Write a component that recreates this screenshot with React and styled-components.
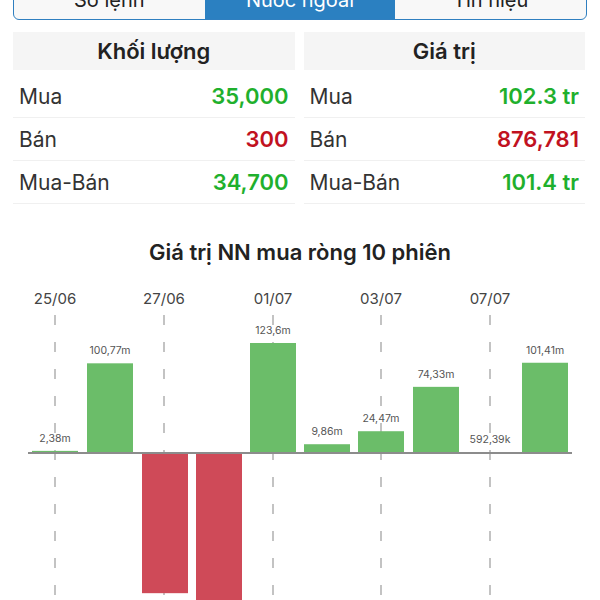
import React from "react";
import styled, { createGlobalStyle } from "styled-components";

const Global = createGlobalStyle`
  html, body { margin: 0; padding: 0; background: #ffffff; }
  body { font-family: Inter, "Noto Sans", "Liberation Sans", sans-serif; overflow: hidden; width: 600px; height: 600px; }
`;

const Page = styled.div`
  width: 600px;
  height: 600px;
  overflow: hidden;
  display: flex;
  flex-direction: column;
`;

const Segment = styled.div`
  margin: -20px 13px 0;
  height: 40px;
  display: flex;
  border: 1px solid #2f7fc0;
  border-radius: 6px;
  overflow: hidden;
  box-sizing: border-box;
  background: #f8f8f8;
`;

const SegItem = styled.div`
  flex: 1;
  display: flex;
  align-items: center;
  justify-content: center;
  font-size: 20px;
  color: ${(p) => (p.$active ? "#ffffff" : "#222222")};
  background: ${(p) => (p.$active ? "#2b80c1" : "transparent")};
`;

const Tables = styled.div`
  margin: 12px 15px 0 13px;
  display: grid;
  grid-template-columns: 1fr 1fr;
  gap: 9px;
`;

const Panel = styled.div`
  display: flex;
  flex-direction: column;
`;

const Header = styled.div`
  height: 38px;
  background: #f5f5f5;
  display: flex;
  align-items: center;
  justify-content: center;
  font-size: 22px;
  font-weight: 600;
  color: #222222;
  margin-bottom: 5px;
`;

const Row = styled.div`
  height: 43px;
  box-sizing: border-box;
  border-bottom: 1px solid #f0f0f0;
  display: flex;
  align-items: center;
  justify-content: space-between;
  padding: 0 6px;
  font-size: 21px;
`;

const Label = styled.span`
  color: #333333;
`;

const Value = styled.span`
  font-size: 22px;
  font-weight: 600;
  color: ${(p) => (p.$tone === "down" ? "#c1121f" : "#1fb02d")};
`;

const Title = styled.div`
  margin-top: 34px;
  height: 28px;
  line-height: 28px;
  text-align: center;
  font-size: 22px;
  font-weight: 600;
  color: #222222;
`;

const ChartSvg = styled.svg`
  display: block;
  margin-top: 14px;
  flex-shrink: 0;
`;

const tables = [
  {
    title: "Khối lượng",
    rows: [
      ["Mua", "35,000", "up"],
      ["Bán", "300", "down"],
      ["Mua-Bán", "34,700", "up"],
    ],
  },
  {
    title: "Giá trị",
    rows: [
      ["Mua", "102.3 tr", "up"],
      ["Bán", "876,781", "down"],
      ["Mua-Bán", "101.4 tr", "up"],
    ],
  },
];

const bars = [
  { x: 32, v: 2.38, label: "2,38m" },
  { x: 87, v: 100.77, label: "100,77m" },
  { x: 142, v: -157.5, label: "" },
  { x: 196, v: -175, label: "" },
  { x: 250, v: 123.6, label: "123,6m" },
  { x: 304, v: 9.86, label: "9,86m" },
  { x: 358, v: 24.47, label: "24,47m" },
  { x: 413, v: 74.33, label: "74,33m" },
  { x: 467, v: 0.59, label: "592,39k" },
  { x: 522, v: 101.41, label: "101,41m" },
];

const dates = [
  { x: 55, t: "25/06" },
  { x: 164, t: "27/06" },
  { x: 273, t: "01/07" },
  { x: 381, t: "03/07" },
  { x: 490, t: "07/07" },
];

const BASE = 453;
const K = 0.89;
const W = 46;

function Chart() {
  return (
    <ChartSvg width="600" height="320" viewBox="0 280 600 320">
      {dates.map((d) => (
        <g key={d.t}>
          <text x={d.x} y={300} textAnchor="middle" dominantBaseline="middle" fontSize="15" fill="#444" fontFamily="Inter, sans-serif">
            {d.t}
          </text>
          <line x1={d.x} x2={d.x} y1={315} y2={600} stroke="#b0b0b0" strokeWidth="1.5" strokeDasharray="10 17" />
        </g>
      ))}
      {bars.map((b, i) => {
        const h = Math.max(Math.abs(b.v) * K, 1);
        const pos = b.v >= 0;
        const y = pos ? BASE - h : BASE;
        return (
          <g key={i}>
            {b.label && pos && (
              <text x={b.x + W / 2} y={y - 12} textAnchor="middle" dominantBaseline="middle" fontSize="10.5" fill="#555" fontFamily="Inter, sans-serif">
                {b.label}
              </text>
            )}
            <rect x={b.x} y={y} width={W} height={h} fill={pos ? "#6bbd69" : "#cf4a58"} />
          </g>
        );
      })}
      <line x1={28} x2={572} y1={BASE} y2={BASE} stroke="#8c8c8c" strokeWidth="2" />
    </ChartSvg>
  );
}

export default function App() {
  return (
    <>
      <Global />
      <Page>
        <Segment>
          <SegItem>Số lệnh</SegItem>
          <SegItem $active>Nước ngoài</SegItem>
          <SegItem>Tín hiệu</SegItem>
        </Segment>
        <Tables>
          {tables.map((t) => (
            <Panel key={t.title}>
              <Header>{t.title}</Header>
              {t.rows.map(([l, v, tone]) => (
                <Row key={l}>
                  <Label>{l}</Label>
                  <Value $tone={tone}>{v}</Value>
                </Row>
              ))}
            </Panel>
          ))}
        </Tables>
        <Title>Giá trị NN mua ròng 10 phiên</Title>
        <Chart />
      </Page>
    </>
  );
}
